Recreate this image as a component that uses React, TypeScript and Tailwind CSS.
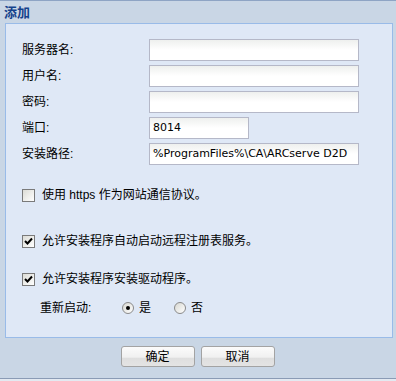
import React from 'react';

const cjk = { fontFamily: '"Liberation Sans", "Noto Sans CJK SC", sans-serif' };

function Field({ label, value, wide = true }: { label: string; value?: string; wide?: boolean }) {
  return (
    <div className="flex items-center h-[22px]">
      <div className="w-[127px] text-[12px] text-black leading-none">{label}</div>
      <div
        className={`h-[22px] ${wide ? 'w-[210px]' : 'w-[100px]'} border border-[#b5b8c8] bg-gradient-to-b from-[#eef0ee] via-white to-white flex items-center pl-[3px] text-[11px] text-black whitespace-nowrap overflow-hidden font-['DejaVu_Sans',sans-serif]`}
      >
        {value}
      </div>
    </div>
  );
}

function Check({ checked, label }: { checked: boolean; label: string }) {
  return (
    <div className="flex items-center h-[14px]">
      <span className="w-[13px] h-[13px] border border-[#7a7a7a] bg-gradient-to-br from-[#dcdcd6] to-white flex items-center justify-center">
        {checked && (
          <svg width="9" height="9" viewBox="0 0 9 9">
            <path d="M1 4 L3.5 6.5 L8 1.5" stroke="#000" strokeWidth="2" fill="none" />
          </svg>
        )}
      </span>
      <span className="ml-[7px] text-[12px] text-black leading-none">{label}</span>
    </div>
  );
}

function Radio({ checked, label }: { checked: boolean; label: string }) {
  return (
    <div className="flex items-center">
      <span className="w-[12px] h-[12px] rounded-full border border-[#8a8a8a] bg-gradient-to-br from-[#d8d8d2] to-white flex items-center justify-center">
        {checked && <span className="w-[4px] h-[4px] rounded-full bg-black" />}
      </span>
      <span className="ml-[5px] text-[12px] text-black leading-none">{label}</span>
    </div>
  );
}

export default function App() {
  return (
    <div className="w-[396px] h-[381px] bg-[#c9d6e5] flex flex-col overflow-hidden" style={cjk}>
      <div className="h-[23px] border-t border-[#8ea4c4] pl-[4px] flex items-center">
        <span className="text-[13px] font-bold text-[#15428b] leading-none">添加</span>
      </div>
      <div className="ml-[5px] mr-[3px] h-[315px] border border-[#99bbe8] bg-[#dfe8f6] pl-[16px] pt-[15px]">
        <div className="flex flex-col gap-[4px]">
          <Field label="服务器名:" />
          <Field label="用户名:" />
          <Field label="密码:" />
          <Field label="端口:" value="8014" wide={false} />
          <Field label="安装路径:" value="%ProgramFiles%\CA\ARCserve D2D" />
        </div>
        <div className="mt-[23px]">
          <Check checked={false} label="使用 https 作为网站通信协议。" />
        </div>
        <div className="mt-[32px]">
          <Check checked label="允许安装程序自动启动远程注册表服务。" />
        </div>
        <div className="mt-[24px]">
          <Check checked label="允许安装程序安装驱动程序。" />
        </div>
        <div className="mt-[16px] ml-[18px] flex items-center">
          <span className="w-[82px] text-[12px] text-black leading-none">重新启动:</span>
          <Radio checked label="是" />
          <span className="w-[23px]" />
          <Radio checked={false} label="否" />
        </div>
      </div>
      <div className="flex justify-center gap-[6px] mt-[8px] pr-[1px]">
        {['确定', '取消'].map((t) => (
          <button
            key={t}
            className="w-[74px] h-[21px] rounded-[3px] border border-[#a3a3a3] bg-[linear-gradient(to_bottom,#fbfbfb_0%,#f0f0f0_55%,#dedede_56%,#e4e4e4_100%)] text-[12px] text-black leading-none"
          >
            {t}
          </button>
        ))}
      </div>
      <div className="mt-auto h-[3px] border-t border-[#8a9bb5] bg-[#e3e9f1]" />
    </div>
  );
}
